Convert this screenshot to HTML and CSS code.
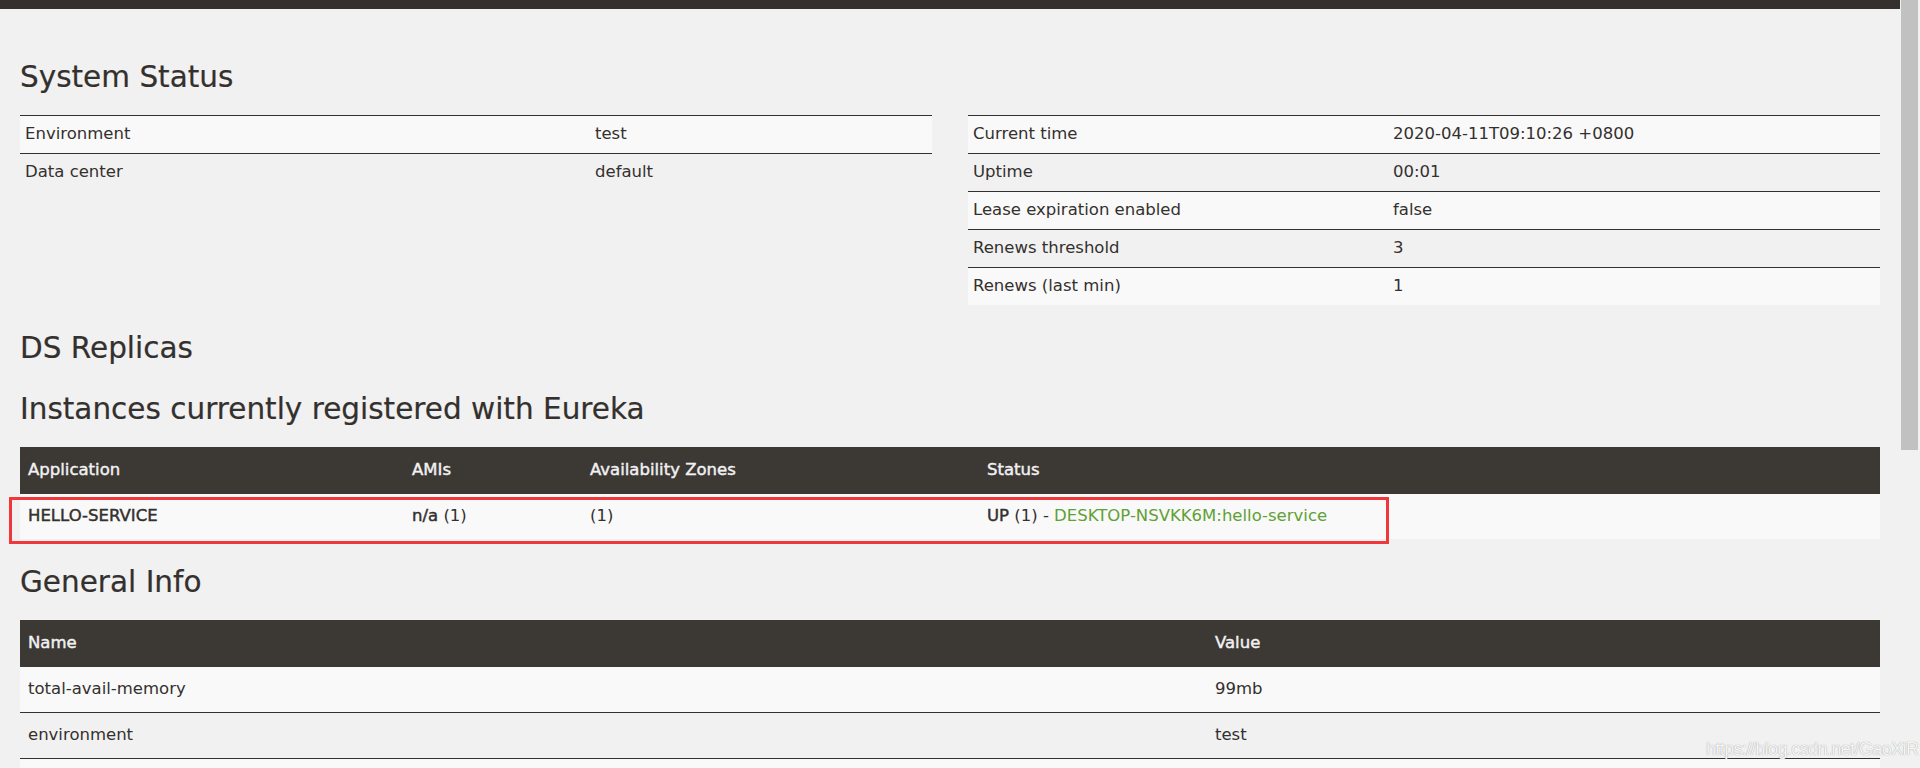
FILE: index.html
```html
<!DOCTYPE html>
<html lang="en">
<head>
<meta charset="utf-8">
<title>Eureka</title>
<link rel="stylesheet" href="styles.css">
</head>
<body>
<div class="page">
  <div class="main">
    <div class="navbar-edge"></div>
    <div class="content">
      <h2 class="title first">System Status</h2>
      <div class="two-cols">
        <table class="status-table">
          <colgroup><col class="key-left"><col></colgroup>
          <tbody>
            <tr><td>Environment</td><td>test</td></tr>
            <tr><td>Data center</td><td>default</td></tr>
          </tbody>
        </table>
        <table class="status-table">
          <colgroup><col class="key-right"><col></colgroup>
          <tbody>
            <tr><td>Current time</td><td>2020-04-11T09:10:26 +0800</td></tr>
            <tr><td>Uptime</td><td>00:01</td></tr>
            <tr><td>Lease expiration enabled</td><td>false</td></tr>
            <tr><td>Renews threshold</td><td>3</td></tr>
            <tr><td>Renews (last min)</td><td>1</td></tr>
          </tbody>
        </table>
      </div>

      <h2 class="title">DS Replicas</h2>

      <h2 class="title">Instances currently registered with Eureka</h2>
      <div class="instances-wrap">
        <table class="data-table">
          <colgroup>
            <col class="c-app"><col class="c-ami"><col class="c-zone"><col>
          </colgroup>
          <thead>
            <tr><th>Application</th><th>AMIs</th><th>Availability Zones</th><th>Status</th></tr>
          </thead>
          <tbody>
            <tr>
              <td><b class="strong">HELLO-SERVICE</b></td>
              <td><b class="strong">n/a</b> (1)</td>
              <td>(1)</td>
              <td><b class="strong">UP</b> (1) - <a class="link" href="#">DESKTOP-NSVKK6M:hello-service</a></td>
            </tr>
          </tbody>
        </table>
        <div class="highlight-box"></div>
      </div>

      <h2 class="title">General Info</h2>
      <table class="data-table">
        <colgroup><col class="c-name"><col></colgroup>
        <thead>
          <tr><th>Name</th><th>Value</th></tr>
        </thead>
        <tbody>
          <tr><td>total-avail-memory</td><td>99mb</td></tr>
          <tr><td>environment</td><td>test</td></tr>
          <tr class="empty-row"><td></td><td></td></tr>
        </tbody>
      </table>
    </div>
  </div>
  <div class="scrollbar"><div class="thumb"></div></div>
</div>
<div class="watermark">https://blog.csdn.net/GaoXiR</div>
</body>
</html>
```

FILE: styles.css
```css
html, body {
  margin: 0;
  padding: 0;
  height: 768px;
  overflow: hidden;
}

body {
  background: #f1f1f1;
  color: #34302d;
  font-family: "DejaVu Sans", "Liberation Sans", sans-serif;
  font-size: 16.5px;
  line-height: 20px;
  position: relative;
}

.page {
  display: flex;
  height: 768px;
}

.main {
  flex: 1;
  min-width: 0;
}

.navbar-edge {
  height: 9px;
  background: #34302d;
}

.content {
  padding: 0 20px;
}

.title {
  font-family: "DejaVu Sans", "Liberation Sans", sans-serif;
  font-weight: normal;
  font-size: 29.5px;
  line-height: 36px;
  margin: 25px 0 20px;
  color: #34302d;
  -webkit-text-stroke: 0.2px #34302d;
}

.title.first {
  margin-top: 50px;
}

.two-cols {
  display: grid;
  grid-template-columns: 1fr 1fr;
  column-gap: 36px;
  align-items: start;
}

.status-table,
.data-table {
  width: 100%;
  border-collapse: collapse;
  table-layout: fixed;
}

.status-table td {
  border-top: 1px solid #34302d;
  padding: 8px 5px 9px;
  text-align: left;
  white-space: nowrap;
}

.status-table tr:nth-child(odd) td {
  background: #f9f9f9;
}

.key-left { width: 570px; }
.key-right { width: 420px; }

.data-table th {
  background: #3c3834;
  color: #f1f1f1;
  text-align: left;
  font-weight: normal;
  -webkit-text-stroke: 0.45px #f1f1f1;
  padding: 13px 8px;
}

.data-table td {
  border-top: 1px solid #34302d;
  padding: 12px 8px 13px;
  text-align: left;
  white-space: nowrap;
}

.data-table .empty-row td {
  height: 20px;
}

.data-table thead + tbody tr:first-child td {
  border-top-color: #3c3834;
}

.data-table tbody tr:nth-child(odd) td {
  background: #f9f9f9;
}

.c-app { width: 384px; }
.c-ami { width: 178px; }
.c-zone { width: 397px; }
.c-name { width: 1187px; }

.strong {
  font-weight: normal;
  -webkit-text-stroke: 0.45px #34302d;
}

.link {
  color: #5fa134;
  text-decoration: none;
}

.instances-wrap {
  position: relative;
}

.highlight-box {
  position: absolute;
  top: 50px;
  left: -11px;
  width: 1380px;
  height: 47px;
  box-sizing: border-box;
  border: 3px solid #f0383c;
  pointer-events: none;
}

.scrollbar {
  width: 20px;
  flex: none;
  background: #f1f1f1;
  padding: 0 2px 0 1px;
  box-sizing: border-box;
}

.thumb {
  height: 450px;
  background: #c1c1c1;
}

.watermark {
  position: absolute;
  left: 1706px;
  top: 739px;
  font-family: "Liberation Sans", Arial, sans-serif;
  font-size: 18px;
  letter-spacing: -0.6px;
  line-height: 20px;
  color: #f6f6f6;
  text-shadow: 0 0 1px #8a8a8a;
  white-space: nowrap;
}
```
